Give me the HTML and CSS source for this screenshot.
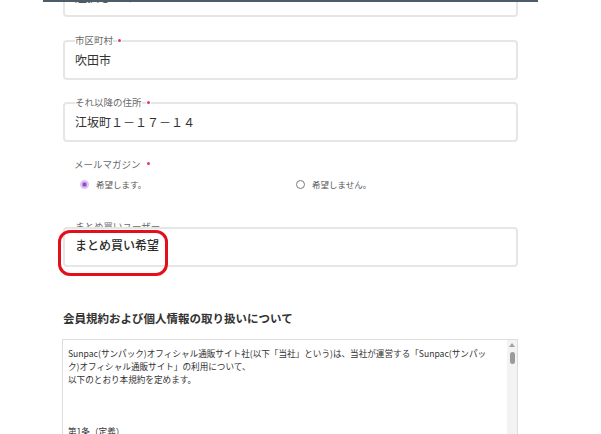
FILE: index.html
```html
<!DOCTYPE html>
<html lang="ja">
<head>
<meta charset="utf-8">
<title>会員登録</title>
<link rel="stylesheet" href="styles.css">
</head>
<body>
<div class="topbar"></div>
<main class="page">
  <div class="field">
    <span class="value muted">選択してください</span>
  </div>

  <div class="field gap-a">
    <div class="legend"><span class="legend-text">市区町村</span><span class="req"></span></div>
    <span class="value">吹田市</span>
  </div>

  <div class="field gap-b">
    <div class="legend"><span class="legend-text">それ以降の住所</span><span class="req"></span></div>
    <span class="value">江坂町１－１７－１４</span>
  </div>

  <div class="mail-label">メールマガジン<span class="req req-inline"></span></div>
  <div class="radios">
    <label class="radio"><span class="dot checked"></span><span>希望します。</span></label>
    <label class="radio"><span class="dot"></span><span>希望しません。</span></label>
  </div>

  <div class="peek">まとめ買いユーザー</div>
  <div class="field field-last">
    <span class="value strong">まとめ買い希望</span>
    <span class="mark"></span>
  </div>

  <h2 class="heading">会員規約および個人情報の取り扱いについて</h2>

  <div class="terms">
    <div class="terms-text">Sunpac(サンパック)オフィシャル通販サイト社(以下「当社」という)は、当社が運営する「Sunpac(サンパッ<br>ク)オフィシャル通販サイト」の利用について、<br>以下のとおり本規約を定めます。<br><br><br><br>第1条（定義）</div>
    <div class="scrollbar">
      <span class="arrow"></span>
      <span class="thumb"></span>
    </div>
  </div>
</main>
</body>
</html>
```

FILE: styles.css
```css
html, body {
  margin: 0;
  padding: 0;
}

body {
  width: 601px;
  height: 434px;
  overflow: hidden;
  background: #ffffff;
  font-family: "Noto Sans CJK JP", "Noto Sans", sans-serif;
  color: #333333;
}

.topbar {
  position: fixed;
  top: 0;
  left: 43px;
  width: 495px;
  height: 2px;
  background: #4e5c69;
  z-index: 5;
}

.page {
  margin-left: 63px;
  margin-top: -23px;
  width: 455px;
}

.field {
  position: relative;
  box-sizing: border-box;
  height: 40px;
  border: 2px solid #e6e6e6;
  border-radius: 4px;
  padding-left: 10px;
  display: flex;
  align-items: center;
  background: #ffffff;
}

.gap-a { margin-top: 23px; }
.gap-b { margin-top: 22px; }

.legend {
  position: absolute;
  top: -7px;
  left: 10px;
  display: flex;
  align-items: center;
  gap: 5px;
  font-size: 9.5px;
  line-height: 10px;
  color: #6a6a6a;
}

.legend-text {
  background: #ffffff;
}

.req {
  display: inline-block;
  width: 3px;
  height: 3px;
  border-radius: 50%;
  background: #e8336b;
  box-shadow: 0 0 0 1px #ffffff;
}

.req-inline {
  margin-left: 6px;
  vertical-align: middle;
  position: relative;
  top: -2px;
}

.value {
  font-size: 12px;
  line-height: 16px;
  color: #333333;
}

.muted {
  color: #555555;
}

.strong {
  font-weight: 500;
  color: #2a2a2a;
}

.mail-label {
  margin-top: 16px;
  padding-left: 11px;
  font-size: 9.5px;
  line-height: 12px;
  color: #6a6a6a;
}

.radios {
  margin-top: 8px;
  padding-left: 17px;
  display: grid;
  grid-template-columns: 216px auto;
  height: 12px;
}

.radio {
  display: flex;
  align-items: center;
  gap: 7px;
  font-size: 8.5px;
  line-height: 12px;
  color: #555555;
}

.dot {
  box-sizing: border-box;
  width: 9px;
  height: 9px;
  border-radius: 50%;
  border: 1px solid #7a7a7a;
  background: #ffffff;
  flex: none;
}

.dot.checked {
  border: 2px solid #dcc6f2;
  background: #9a45d0;
  box-shadow: inset 0 0 0 0.5px #cfa9ee;
}

.peek {
  margin-top: 30px;
  height: 7px;
  overflow: hidden;
  padding-left: 12px;
  font-size: 9.5px;
  line-height: 12px;
  color: #6a6a6a;
}

.field-last {
  padding-bottom: 4px;
}

.mark {
  position: absolute;
  left: -7px;
  top: 1px;
  width: 110px;
  height: 46px;
  box-sizing: border-box;
  border: 3px solid #e3101c;
  border-radius: 12px;
}

.heading {
  margin: 44px 0 0 0;
  font-size: 11.5px;
  line-height: 14px;
  font-weight: 700;
  color: #333333;
}

.terms {
  margin-top: 14px;
  margin-left: -1px;
  width: 456px;
  height: 120px;
  box-sizing: border-box;
  border: 1px solid #dddddd;
  display: flex;
}

.terms-text {
  flex: 1;
  padding: 7px 0 0 5px;
  font-size: 8.6px;
  line-height: 13px;
  color: #333333;
  white-space: nowrap;
  overflow: hidden;
}

.scrollbar {
  width: 10px;
  background: #f3f3f3;
  display: flex;
  flex-direction: column;
  align-items: center;
  padding-top: 3px;
}

.arrow {
  width: 0;
  height: 0;
  border-left: 3px solid transparent;
  border-right: 3px solid transparent;
  border-bottom: 4px solid #a3a3a3;
}

.thumb {
  margin-top: 5px;
  width: 5px;
  height: 12px;
  border-radius: 3px;
  background: #9b9b9b;
}
```
